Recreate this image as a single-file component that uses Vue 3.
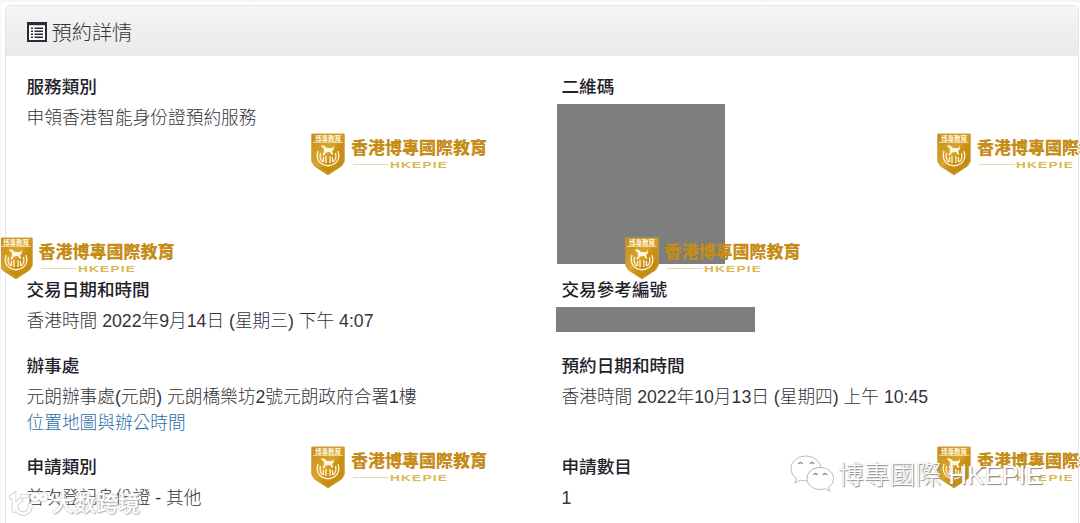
<template>
  <div class="page">
    <section class="panel">
      <header class="panel-heading">
        <svg class="list-icon" viewBox="0 0 20 20">
          <path d="M1 1h18v18H1z" fill="#fff" stroke="#2b2b35" stroke-width="2" />
          <path d="M0 0h20v3.2H0z" fill="#2b2b35" />
          <path d="M4 6.2h2M4 9.2h2M4 12.2h2M4 15.2h2M7.5 6.2H16M7.5 9.2H16M7.5 12.2H16M7.5 15.2H16" stroke="#2b2b35" stroke-width="1.5" />
        </svg>
        <h1>預約詳情</h1>
      </header>

      <div class="panel-body">
        <div v-for="(row, i) in rows" :key="i" class="row" :class="row.size">
          <div v-for="field in row.fields" :key="field.label" class="field">
            <h2>{{ field.label }}</h2>
            <div v-if="field.mask" class="mask" :class="field.mask"></div>
            <p v-else>{{ field.value }}</p>
            <a v-if="field.link" href="#">{{ field.link }}</a>
          </div>
        </div>
      </div>
    </section>

    <div v-for="(mark, i) in marks" :key="'m' + i" class="brand" :style="{ left: mark.x + 'px', top: mark.y + 'px' }">
      <svg class="shield" viewBox="0 0 34 43">
        <defs>
          <linearGradient :id="'gold' + i" x1="0" y1="0" x2="1" y2="1">
            <stop offset="0" stop-color="#c58b16" />
            <stop offset="0.45" stop-color="#d9a62d" />
            <stop offset="0.6" stop-color="#c98f12" />
            <stop offset="1" stop-color="#c4890f" />
          </linearGradient>
        </defs>
        <path d="M.8 1h32.4v27.5L30.5 33 17 41.8 3.5 33 .8 28.5z" :fill="'url(#gold' + i + ')'" stroke="#cc9a35" />
        <path d="M2 9.3h30" stroke="#fff1cf" stroke-width=".8" />
        <text x="17" y="8.2" text-anchor="middle">博專教育</text>
        <path d="M10.5 12l3.5 1 2 2h5l2-2-.5 4-1.5 1 1.5 4-2-.5-1.5-2.5-4 .5-2 3-1.5-.5 1.5-3.5-.5-3.5-2-1z" fill="#fff4dc" />
        <path d="M7 18Q4.5 26 10 30.5 17 35 24 30.5 29.5 26 27 18M9.5 20Q8 26 12 29M24.5 20Q26 26 22 29" fill="none" stroke="#fff4dc" stroke-width="1.3" />
        <path d="M12.5 24v5M15 23v7M19 23v7M21.5 24v5" stroke="#fff4dc" stroke-width="1.3" />
      </svg>
      <div class="brand-text">
        <span class="brand-name">香港博專國際教育</span>
        <span class="brand-sub"><i></i><svg viewBox="0 0 60 10"><text x="0" y="8" textLength="58" lengthAdjust="spacingAndGlyphs">HKEPIE</text></svg></span>
      </div>
    </div>

    <div class="account">
      <svg class="wechat" viewBox="0 0 44 38">
        <g fill="#fff" stroke="#aaa" stroke-width=".8">
          <path d="M16 1C7.5 1 1 6.5 1 13.5c0 4 2 7.5 5.5 9.8L5 28l5.5-2.8c2 .5 4.5.8 7 .5C17 18 23 12.500 31 12.500 30 6 23.500 1 16 1z" />
          <path d="M30 12.5c-7.5 0-13 5-13 11s5.500 11 13 11c1.800 0 3.500-.3 5-.8l5 2.500-1.500-4c3-2 5-5 5-8.700 0-6-6-11-13.500-11z" />
        </g>
        <path d="M8.5 9q2-3 4 0M20 9q2-3 4 0M23.5 20q2-3 4 0M33 20q2-3 4 0" fill="none" stroke="#888" stroke-width="1.3" />
      </svg>
      <span>博專國際 HKEPIE</span>
    </div>

    <div class="source">
      <svg viewBox="0 0 42 26">
        <g fill="none" stroke-linecap="round">
          <path d="M3 6l3-2v16M13 9a7 7 0 1 0 9 5M14 5h5M27 3a3 3 0 1 0 .1 0M35 3a3 3 0 1 0 .1 0" stroke="#ccc" stroke-width="4.6" />
          <path d="M3 6l3-2v16M13 9a7 7 0 1 0 9 5M14 5h5M27 3a3 3 0 1 0 .1 0M35 3a3 3 0 1 0 .1 0" stroke="#fff" stroke-width="3" />
        </g>
      </svg>
      <span>大数跨境</span>
    </div>
  </div>
</template>

<script setup>
const rows = [
  {
    size: 'tall',
    fields: [
      { label: '服務類別', value: '申領香港智能身份證預約服務' },
      { label: '二維碼', mask: 'qr' }
    ]
  },
  {
    size: 'normal',
    fields: [
      { label: '交易日期和時間', value: '香港時間 2022年9月14日 (星期三) 下午 4:07' },
      { label: '交易參考編號', mask: 'reference' }
    ]
  },
  {
    size: 'linked',
    fields: [
      {
        label: '辦事處',
        value: '元朗辦事處(元朗) 元朗橋樂坊2號元朗政府合署1樓',
        link: '位置地圖與辦公時間'
      },
      { label: '預約日期和時間', value: '香港時間 2022年10月13日 (星期四) 上午 10:45' }
    ]
  },
  {
    size: 'normal',
    fields: [
      { label: '申請類別', value: '首次登記身份證 - 其他' },
      { label: '申請數目', value: '1' }
    ]
  }
]

const marks = [
  { x: 310, y: 131 },
  { x: 936, y: 131 },
  { x: -2.5, y: 235 },
  { x: 623.5, y: 235 },
  { x: 310, y: 444 },
  { x: 936, y: 444 }
]
</script>

<style>
body {
  margin: 0;
  overflow: hidden;
}
</style>

<style scoped>
.page {
  position: relative;
  box-sizing: border-box;
  width: 1080px;
  height: 523px;
  padding: 5px 1px 0 5px;
  overflow: hidden;
  background: #fff;
  border-top: 2px solid #f3f5f7;
  border-left: 1px solid #f4f5f8;
  font-family: "Liberation Sans", "Noto Sans CJK TC", sans-serif;
  font-size: 17.7px;
  color: #33333b;
}

.panel {
  box-sizing: border-box;
  height: 530px;
  margin: -2px 0 0 -1px;
  border: 1px solid #e3e5e6;
  border-radius: 5px;
}

.panel-heading {
  box-sizing: border-box;
  display: flex;
  align-items: center;
  gap: 5px;
  height: 50px;
  padding: 2px 20.5px 0;
  border-radius: 4px 4px 0 0;
  background: linear-gradient(#f5f5f5, #e8e9e9);
}

.list-icon {
  width: 20px;
  height: 20px;
}

h1 {
  margin: 0;
  padding-top: 1px;
  font-size: 20.2px;
  font-weight: 300;
  line-height: 26px;
}

.panel-body {
  padding: 18px 20.5px 0;
}

.row {
  display: grid;
  grid-template-columns: 535px 1fr;
}

.tall {
  height: 203px;
}

.normal {
  height: 76px;
}

.linked {
  height: 101px;
}

.field {
  white-space: nowrap;
}

h2 {
  margin: 0 0 5px;
  font-size: 17.6px;
  font-weight: 500;
  line-height: 26px;
  color: #22222a;
}

p {
  margin: 0;
  font-weight: 300;
  line-height: 26px;
}

a {
  display: block;
  font-weight: 300;
  line-height: 26px;
  color: #2d6ca8;
  text-decoration: none;
}

.mask {
  background: #7d7f7e;
}

.qr {
  width: 168px;
  height: 160px;
  margin: -1px 0 0 -4.5px;
}

.reference {
  width: 199px;
  height: 25px;
  margin: -1px 0 0 -5.5px;
}

/* Repeated brand stamp */
.brand {
  position: absolute;
  display: flex;
  gap: 6px;
  white-space: nowrap;
}

.shield {
  width: 34px;
  height: 43px;
}

.shield text {
  font: 700 6.5px "Noto Sans CJK TC", sans-serif;
  fill: #fff4dc;
}

.brand-text {
  display: flex;
  flex-direction: column;
}

.brand-name {
  font: 900 17px/28px "Noto Sans CJK TC", sans-serif;
  color: #c58c18;
}

.brand-sub {
  display: flex;
  align-items: center;
  gap: 1px;
  height: 7px;
}

.brand-sub i {
  width: 36px;
  height: 1px;
  margin-left: 2px;
  background: #ecd9ac;
}

.brand-sub svg {
  width: 60px;
  height: 10px;
}

.brand-sub text {
  font: 700 9px "Liberation Sans", sans-serif;
  letter-spacing: 0.8px;
  fill: #dab750;
}

.account {
  position: absolute;
  left: 789px;
  top: 452px;
  display: flex;
  align-items: center;
  gap: 4px;
  white-space: nowrap;
  font-size: 25.8px;
  font-weight: 300;
  color: #fff;
  text-shadow: 1px 1px 1px #888, 0 0 1px #bbb;
}

.account span {
  padding-bottom: 2px;
}

.wechat {
  width: 44px;
  height: 38px;
}

.source {
  position: absolute;
  left: 7px;
  top: 487px;
  display: flex;
  align-items: center;
  gap: 2px;
  font-size: 22px;
  font-weight: 500;
  line-height: 30px;
  color: #fff;
  text-shadow: 0 0 2px #aaa, 1px 1px 1px #bbb;
}

.source svg {
  width: 42px;
  height: 26px;
}
</style>
